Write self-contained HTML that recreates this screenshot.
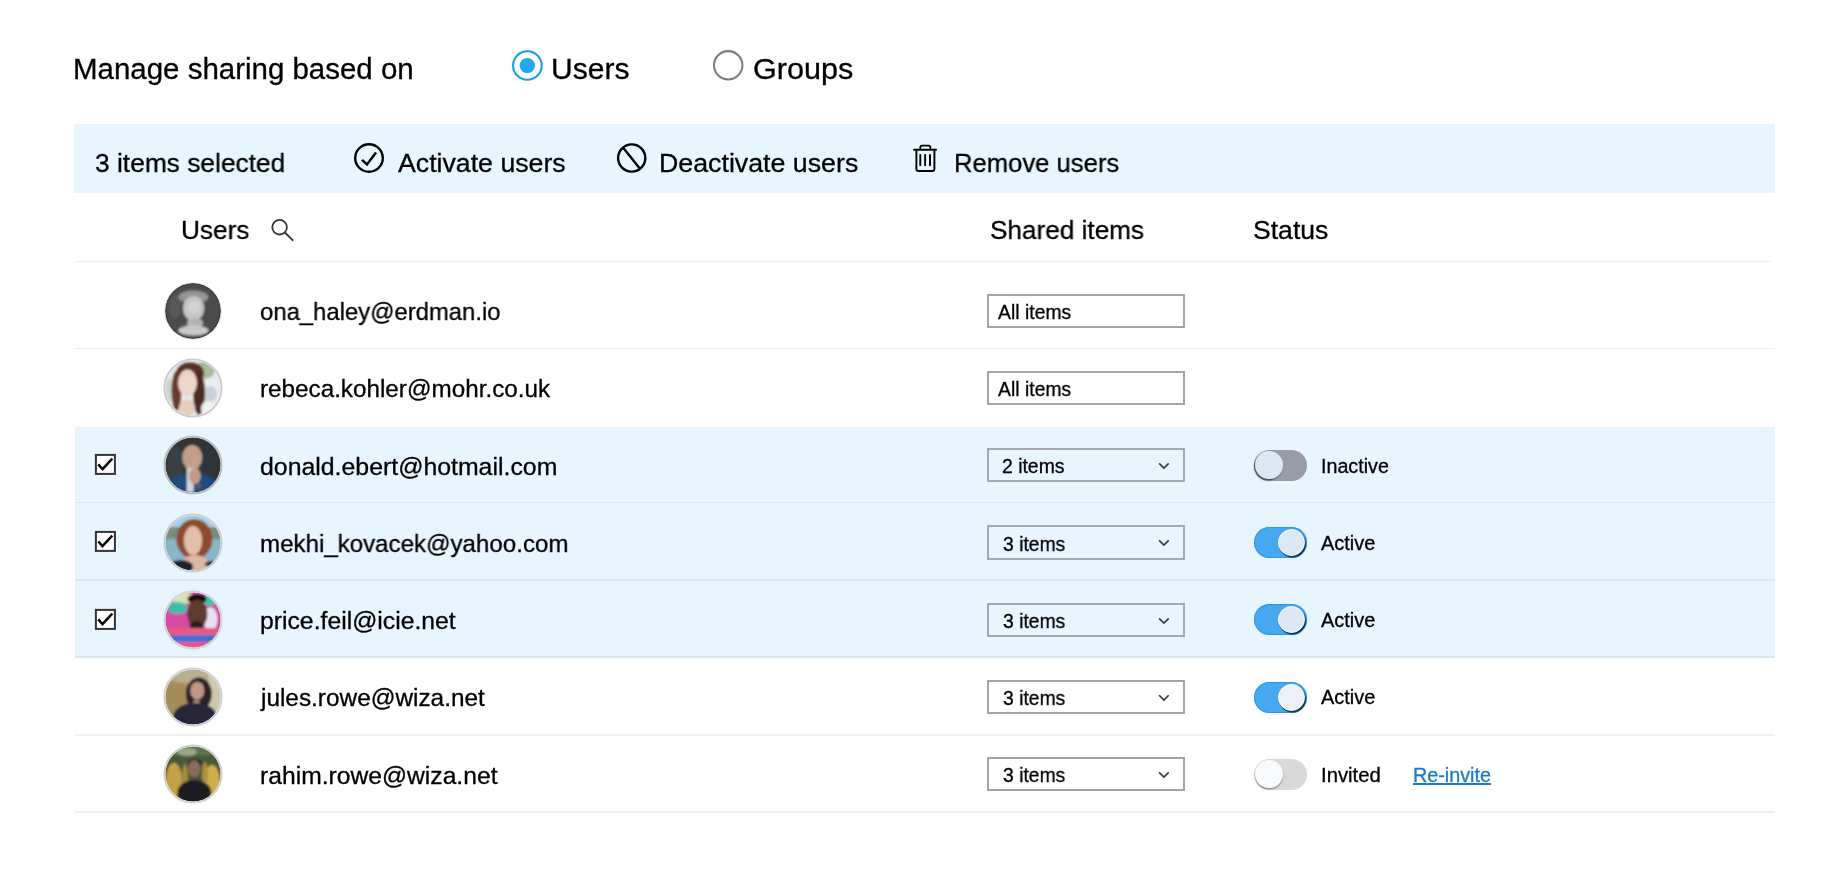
<!DOCTYPE html>
<html><head><meta charset="utf-8"><title>Manage sharing</title>
<style>
html,body{margin:0;padding:0;background:#fff;width:1830px;height:872px;overflow:hidden;position:relative}
body{font-family:"Liberation Sans",sans-serif}
.t{position:absolute;white-space:nowrap;transform-origin:0 0;font-family:"Liberation Sans",sans-serif;will-change:transform;-webkit-text-stroke:0.3px currentColor}
.tg{position:absolute;left:1254px;width:53px;height:31px;border-radius:15.5px}
.kn{position:absolute;top:1.2px;width:28.6px;height:28.6px;border-radius:50%}
</style></head><body>
<div class="t" style="left:73.28px;top:55.18px;font-size:29.2px;line-height:29.2px;transform:scaleX(1.0094);color:#000;">Manage sharing based on</div>
<div class="t" style="left:551.18px;top:55.18px;font-size:29.2px;line-height:29.2px;transform:scaleX(1.0296);color:#000;">Users</div>
<div class="t" style="left:752.76px;top:55.18px;font-size:29.2px;line-height:29.2px;transform:scaleX(1.0479);color:#000;">Groups</div>
<svg style="position:absolute;left:0;top:0" width="1830" height="120"><circle cx="527.4" cy="65.5" r="14.3" fill="#fff" stroke="#1a9fe6" stroke-width="2.1"/><circle cx="527.3" cy="65.6" r="7.7" fill="#24a8ee"/><circle cx="728.2" cy="65.3" r="14.2" fill="#fff" stroke="#7c7c7c" stroke-width="2.1"/></svg>
<div style="position:absolute;left:73.5px;top:123.5px;width:1701.5px;height:69.5px;background:#e6f5fe"></div>
<div class="t" style="left:94.60px;top:150.15px;font-size:26.4px;line-height:26.4px;transform:scaleX(0.9976);color:#000;">3 items selected</div>
<div class="t" style="left:398.25px;top:150.15px;font-size:26.4px;line-height:26.4px;transform:scaleX(1.0116);color:#000;">Activate users</div>
<div class="t" style="left:659.20px;top:150.15px;font-size:26.4px;line-height:26.4px;transform:scaleX(1.0139);color:#000;">Deactivate users</div>
<div class="t" style="left:953.50px;top:150.15px;font-size:26.4px;line-height:26.4px;transform:scaleX(0.9708);color:#000;">Remove users</div>
<svg style="position:absolute;left:0;top:120px" width="1200" height="80" viewBox="0 120 1200 80"><circle cx="369" cy="158" r="13.8" fill="none" stroke="#000" stroke-width="2.4"/><path d="M362 159.8 L367 164.5 L376 152.6" fill="none" stroke="#000" stroke-width="2.5" stroke-linecap="butt" stroke-linejoin="miter"/><circle cx="631.7" cy="158" r="13.6" fill="none" stroke="#000" stroke-width="2.4"/><path d="M623.0 147.6 L639.8 168.6" stroke="#000" stroke-width="2.4"/><path d="M914.1 149.7 H936.1" stroke="#000" stroke-width="1.9" stroke-linecap="round"/><path d="M920.3 149.2 V147.4 Q920.3 145.6 922.1 145.6 H928.6 Q930.4 145.6 930.4 147.4 V149.2" fill="none" stroke="#000" stroke-width="1.8"/><path d="M916.4 150.5 V169 Q916.4 171 918.4 171 H932.4 Q934.4 171 934.4 169 V150.5" fill="none" stroke="#000" stroke-width="1.9"/><path d="M920.3 155 V165.3 M925.1 155 V165.3 M930 155 V165.3" stroke="#000" stroke-width="1.9" stroke-linecap="round"/></svg>
<div class="t" style="left:181.38px;top:217.25px;font-size:26.4px;line-height:26.4px;transform:scaleX(0.9917);color:#000;">Users</div>
<div class="t" style="left:990.21px;top:217.25px;font-size:26.4px;line-height:26.4px;transform:scaleX(0.9903);color:#000;">Shared items</div>
<div class="t" style="left:1252.79px;top:217.25px;font-size:26.4px;line-height:26.4px;transform:scaleX(1.0070);color:#000;">Status</div>
<svg style="position:absolute;left:260px;top:210px" width="40" height="40" viewBox="260 210 40 40"><circle cx="279.6" cy="227.2" r="7.3" fill="none" stroke="#333" stroke-width="1.8"/><path d="M284.9 232.5 L292.6 240.2" stroke="#333" stroke-width="1.9" stroke-linecap="round"/></svg>
<div style="position:absolute;left:75px;top:260.8px;width:1696px;height:1.6px;background:#efefef"></div>
<div style="position:absolute;left:75px;top:426.8px;width:1700px;height:231.6px;background:#e7f5fe"></div>
<div style="position:absolute;left:75px;top:347.7px;width:1700px;height:1.6px;background:#f0f0f0"></div>
<div class="t" style="left:260.20px;top:300.11px;font-size:24.2px;line-height:24.2px;transform:scaleX(0.9866);color:#000;">ona_haley@erdman.io</div>
<div style="position:absolute;left:987px;top:293.5px;width:198px;height:34.3px;box-sizing:border-box;border:2px solid #a4a4a4;background:#fff"></div>
<div class="t" style="left:997.76px;top:302.78px;font-size:19.4px;line-height:19.4px;transform:scaleX(0.9978);color:#000;">All items</div>
<div class="t" style="left:259.59px;top:377.38px;font-size:24.2px;line-height:24.2px;transform:scaleX(1.0023);color:#000;">rebeca.kohler@mohr.co.uk</div>
<div style="position:absolute;left:987px;top:370.8px;width:198px;height:34.3px;box-sizing:border-box;border:2px solid #a4a4a4;background:#fff"></div>
<div class="t" style="left:997.76px;top:380.05px;font-size:19.4px;line-height:19.4px;transform:scaleX(0.9978);color:#000;">All items</div>
<div style="position:absolute;left:75px;top:501.7px;width:1700px;height:1.6px;background:#d9e8f1"></div>
<div class="t" style="left:260.16px;top:454.65px;font-size:24.2px;line-height:24.2px;transform:scaleX(1.0273);color:#000;">donald.ebert@hotmail.com</div>
<div style="position:absolute;left:987px;top:448.0px;width:198px;height:34.3px;box-sizing:border-box;border:2px solid #a2a9b0;background:#e7f5fe"></div>
<div class="t" style="left:1002.43px;top:457.32px;font-size:19.4px;line-height:19.4px;transform:scaleX(0.9991);color:#000;">2 items</div>
<svg style="position:absolute;left:1150px;top:455.1px" width="30" height="20" viewBox="1150 455.1 30 20"><path d="M1159.1 463.44 L1163.9 468.24 L1168.7 463.44" fill="none" stroke="#3a3a3a" stroke-width="1.7"/></svg>
<svg style="position:absolute;left:90px;top:449.1px" width="32" height="32" viewBox="90 449.1 32 32"><rect x="95.9" y="455.0" width="19" height="19" fill="#fff" stroke="#333" stroke-width="2"/><path d="M98.3 464.5 L102.5 469.3 L112.3 458.8" fill="none" stroke="#000" stroke-width="2.5"/></svg>
<div class="t" style="left:1320.68px;top:456.52px;font-size:19.4px;line-height:19.4px;transform:scaleX(1.0155);color:#000;">Inactive</div>
<div class="tg" style="top:449.6px;background:#979da4"><div class="kn" style="left:0.5px;background:#dce9f5;box-shadow:-1px 1.5px 1.5px rgba(0,0,0,.55)"></div></div>
<div style="position:absolute;left:75px;top:579.0px;width:1700px;height:1.6px;background:#d9e8f1"></div>
<div class="t" style="left:259.60px;top:531.92px;font-size:24.2px;line-height:24.2px;transform:scaleX(0.9960);color:#000;">mekhi_kovacek@yahoo.com</div>
<div style="position:absolute;left:987px;top:525.3px;width:198px;height:34.3px;box-sizing:border-box;border:2px solid #a2a9b0;background:#e7f5fe"></div>
<div class="t" style="left:1002.66px;top:534.59px;font-size:19.4px;line-height:19.4px;transform:scaleX(0.9953);color:#000;">3 items</div>
<svg style="position:absolute;left:1150px;top:532.4px" width="30" height="20" viewBox="1150 532.4 30 20"><path d="M1159.1 540.71 L1163.9 545.51 L1168.7 540.71" fill="none" stroke="#3a3a3a" stroke-width="1.7"/></svg>
<svg style="position:absolute;left:90px;top:526.4px" width="32" height="32" viewBox="90 526.4 32 32"><rect x="95.9" y="532.3" width="19" height="19" fill="#fff" stroke="#333" stroke-width="2"/><path d="M98.3 541.8 L102.5 546.6 L112.3 536.1" fill="none" stroke="#000" stroke-width="2.5"/></svg>
<div class="t" style="left:1321.16px;top:533.79px;font-size:19.4px;line-height:19.4px;transform:scaleX(1.0283);color:#000;">Active</div>
<div class="tg" style="top:526.9px;background:#48a8ef;box-shadow:inset 0 0 0 1px rgba(25,140,225,.6)"><div class="kn" style="left:24.0px;top:2.0px;width:27.2px;height:27.2px;background:#dce8f4;border:1.5px solid #fff;box-sizing:border-box;box-shadow:1px 1.5px 1px rgba(0,25,55,.85)"></div></div>
<div style="position:absolute;left:75px;top:656.3px;width:1700px;height:1.6px;background:#d9e8f1"></div>
<div class="t" style="left:259.60px;top:609.19px;font-size:24.2px;line-height:24.2px;transform:scaleX(1.0231);color:#000;">price.feil@icie.net</div>
<div style="position:absolute;left:987px;top:602.6px;width:198px;height:34.3px;box-sizing:border-box;border:2px solid #a2a9b0;background:#e7f5fe"></div>
<div class="t" style="left:1002.66px;top:611.86px;font-size:19.4px;line-height:19.4px;transform:scaleX(0.9953);color:#000;">3 items</div>
<svg style="position:absolute;left:1150px;top:609.7px" width="30" height="20" viewBox="1150 609.7 30 20"><path d="M1159.1 617.98 L1163.9 622.78 L1168.7 617.98" fill="none" stroke="#3a3a3a" stroke-width="1.7"/></svg>
<svg style="position:absolute;left:90px;top:603.7px" width="32" height="32" viewBox="90 603.7 32 32"><rect x="95.9" y="609.6" width="19" height="19" fill="#fff" stroke="#333" stroke-width="2"/><path d="M98.3 619.1 L102.5 623.9 L112.3 613.4" fill="none" stroke="#000" stroke-width="2.5"/></svg>
<div class="t" style="left:1321.16px;top:611.06px;font-size:19.4px;line-height:19.4px;transform:scaleX(1.0283);color:#000;">Active</div>
<div class="tg" style="top:604.2px;background:#48a8ef;box-shadow:inset 0 0 0 1px rgba(25,140,225,.6)"><div class="kn" style="left:24.0px;top:2.0px;width:27.2px;height:27.2px;background:#dce8f4;border:1.5px solid #fff;box-sizing:border-box;box-shadow:1px 1.5px 1px rgba(0,25,55,.85)"></div></div>
<div style="position:absolute;left:75px;top:734.0px;width:1700px;height:1.6px;background:#f0f0f0"></div>
<div class="t" style="left:261.10px;top:686.46px;font-size:24.2px;line-height:24.2px;transform:scaleX(1.0072);color:#000;">jules.rowe@wiza.net</div>
<div style="position:absolute;left:987px;top:679.9px;width:198px;height:34.3px;box-sizing:border-box;border:2px solid #a4a4a4;background:#fff"></div>
<div class="t" style="left:1002.66px;top:689.13px;font-size:19.4px;line-height:19.4px;transform:scaleX(0.9953);color:#000;">3 items</div>
<svg style="position:absolute;left:1150px;top:687.0px" width="30" height="20" viewBox="1150 687.0 30 20"><path d="M1159.1 695.25 L1163.9 700.05 L1168.7 695.25" fill="none" stroke="#3a3a3a" stroke-width="1.7"/></svg>
<div class="t" style="left:1321.16px;top:688.33px;font-size:19.4px;line-height:19.4px;transform:scaleX(1.0283);color:#000;">Active</div>
<div class="tg" style="top:681.5px;background:#48a8ef;box-shadow:inset 0 0 0 1px rgba(25,140,225,.6)"><div class="kn" style="left:24.0px;top:2.0px;width:27.2px;height:27.2px;background:#edf1f5;border:1.5px solid #fff;box-sizing:border-box;box-shadow:1px 1.5px 1px rgba(0,25,55,.85)"></div></div>
<div style="position:absolute;left:75px;top:811.3px;width:1700px;height:1.6px;background:#f0f0f0"></div>
<div class="t" style="left:259.56px;top:763.73px;font-size:24.2px;line-height:24.2px;transform:scaleX(1.0197);color:#000;">rahim.rowe@wiza.net</div>
<div style="position:absolute;left:987px;top:757.1px;width:198px;height:34.3px;box-sizing:border-box;border:2px solid #a4a4a4;background:#fff"></div>
<div class="t" style="left:1002.66px;top:766.40px;font-size:19.4px;line-height:19.4px;transform:scaleX(0.9953);color:#000;">3 items</div>
<svg style="position:absolute;left:1150px;top:764.2px" width="30" height="20" viewBox="1150 764.2 30 20"><path d="M1159.1 772.52 L1163.9 777.32 L1168.7 772.52" fill="none" stroke="#3a3a3a" stroke-width="1.7"/></svg>
<div class="t" style="left:1320.92px;top:765.60px;font-size:19.4px;line-height:19.4px;transform:scaleX(1.0477);color:#000;">Invited</div>
<div class="tg" style="top:758.7px;background:#d9d9d9"><div class="kn" style="left:0.5px;background:#f8fafc;box-shadow:0 1.5px 1.5px rgba(0,0,0,.35)"></div></div>
<div class="t" style="left:1412.68px;top:765.60px;font-size:19.4px;line-height:19.4px;transform:scaleX(1.0190);color:#1a7bc4;text-decoration:underline;text-underline-offset:1px;text-decoration-thickness:1.6px;">Re-invite</div>
<svg style="position:absolute;left:162.3px;top:279.8px" width="62" height="62" viewBox="-31 -31 62 62"><defs><clipPath id="cp0"><circle cx="0" cy="0" r="27.6"/></clipPath><filter id="bl0" x="-50%" y="-50%" width="200%" height="200%"><feGaussianBlur stdDeviation="1.2"/></filter></defs><g clip-path="url(#cp0)"><g filter="url(#bl0)"><rect x="-35" y="-35" width="70" height="70" fill="#4c4c4c"/><ellipse cx="-18" cy="-5" rx="6" ry="12" fill="#585858"/><ellipse cx="0.4" cy="-14" rx="15" ry="6.5" fill="#959595"/><ellipse cx="0.6" cy="-2.6" rx="10.5" ry="12.5" fill="#c6c6c6"/><ellipse cx="1" cy="-4" rx="6" ry="6" fill="#d2d2d2"/><ellipse cx="2" cy="12" rx="8" ry="5" fill="#b5b5b5"/><ellipse cx="0" cy="30" rx="27" ry="8" fill="#545454"/><ellipse cx="0.4" cy="19.5" rx="15" ry="5" fill="#c9c9c9"/></g></g><circle cx="0" cy="0" r="27.3" fill="none" stroke="#3c3c3c" stroke-width="1.2"/><circle cx="0" cy="0" r="28.4" fill="none" stroke="#e6e6e6" stroke-width="1"/></svg>
<svg style="position:absolute;left:162.3px;top:357.1px" width="62" height="62" viewBox="-31 -31 62 62"><defs><clipPath id="cp1"><circle cx="0" cy="0" r="27.6"/></clipPath><filter id="bl1" x="-50%" y="-50%" width="200%" height="200%"><feGaussianBlur stdDeviation="1.2"/></filter></defs><g clip-path="url(#cp1)"><g filter="url(#bl1)"><rect x="-35" y="-35" width="70" height="70" fill="#e8ecee"/><ellipse cx="12" cy="-18" rx="10" ry="9" fill="#a6be96"/><ellipse cx="17" cy="6" rx="7" ry="8" fill="#c8cfd8"/><ellipse cx="-24" cy="2" rx="4" ry="12" fill="#cdd5d4"/><ellipse cx="-3" cy="-15" rx="14" ry="11" fill="#5a3128"/><ellipse cx="-16.5" cy="3" rx="5" ry="20" fill="#6a3a2c"/><ellipse cx="6" cy="5" rx="6" ry="22" fill="#4e2a24"/><ellipse cx="-5.5" cy="-5" rx="9.5" ry="13.5" fill="#ecd6c9"/><ellipse cx="-6" cy="20" rx="8" ry="9" fill="#e6cdbd"/><ellipse cx="15" cy="21" rx="7" ry="8" fill="#f1f1f1"/></g></g><circle cx="0" cy="0" r="28.6" fill="none" stroke="#cbcbcb" stroke-width="1.9"/></svg>
<svg style="position:absolute;left:162.3px;top:434.3px" width="62" height="62" viewBox="-31 -31 62 62"><defs><clipPath id="cp2"><circle cx="0" cy="0" r="27.6"/></clipPath><filter id="bl2" x="-50%" y="-50%" width="200%" height="200%"><feGaussianBlur stdDeviation="1.2"/></filter></defs><g clip-path="url(#cp2)"><g filter="url(#bl2)"><rect x="-35" y="-35" width="70" height="70" fill="#2f3639"/><ellipse cx="-18" cy="0" rx="8" ry="20" fill="#394044"/><ellipse cx="-1" cy="-19" rx="10.5" ry="6" fill="#3b302c"/><ellipse cx="-0.8" cy="-7.4" rx="10" ry="12.5" fill="#c49e8a"/><ellipse cx="0" cy="23" rx="28" ry="14" fill="#1a4c7c"/><rect x="-6.3" y="3" width="7" height="24" fill="#cfd6da"/><ellipse cx="1.8" cy="11" rx="6" ry="8" fill="#c39c88"/><ellipse cx="5.4" cy="21" rx="3" ry="3" fill="#5a5a5a"/></g></g><circle cx="0" cy="0" r="28.6" fill="none" stroke="#b9bec2" stroke-width="1.9"/></svg>
<svg style="position:absolute;left:162.3px;top:511.6px" width="62" height="62" viewBox="-31 -31 62 62"><defs><clipPath id="cp3"><circle cx="0" cy="0" r="27.6"/></clipPath><filter id="bl3" x="-50%" y="-50%" width="200%" height="200%"><feGaussianBlur stdDeviation="1.2"/></filter></defs><g clip-path="url(#cp3)"><g filter="url(#bl3)"><rect x="-35" y="-35" width="70" height="70" fill="#a8d0e4"/><rect x="-35" y="-16" width="70" height="12" fill="#7b8c80"/><rect x="-35" y="-4" width="70" height="40" fill="#8ab4c8"/><ellipse cx="1.4" cy="-4" rx="18" ry="20" fill="#8d4c2f"/><ellipse cx="0" cy="-2.5" rx="9.2" ry="14.5" fill="#e2bfaa"/><ellipse cx="2" cy="22" rx="14" ry="10" fill="#dcb7a3"/><ellipse cx="-12" cy="24" rx="12" ry="7" fill="#1f2333"/><ellipse cx="18" cy="21" rx="6" ry="3" fill="#2c3545"/></g></g><circle cx="0" cy="0" r="28.6" fill="none" stroke="#c9ced2" stroke-width="1.9"/></svg>
<svg style="position:absolute;left:162.3px;top:588.9px" width="62" height="62" viewBox="-31 -31 62 62"><defs><clipPath id="cp4"><circle cx="0" cy="0" r="27.6"/></clipPath><filter id="bl4" x="-50%" y="-50%" width="200%" height="200%"><feGaussianBlur stdDeviation="1.2"/></filter></defs><g clip-path="url(#cp4)"><g filter="url(#bl4)"><rect x="-35" y="-35" width="70" height="70" fill="#d44ca6"/><ellipse cx="-10" cy="-22" rx="12" ry="6" fill="#d8e0b8"/><ellipse cx="-15.5" cy="-12" rx="10" ry="6" fill="#38c1a6"/><ellipse cx="16.5" cy="-19.5" rx="7" ry="5" fill="#3fc5a8"/><ellipse cx="17.5" cy="-1" rx="7" ry="12" fill="#e6e2f2"/><ellipse cx="4" cy="-21" rx="9.5" ry="5" fill="#141010"/><ellipse cx="4.3" cy="-6" rx="10" ry="14" fill="#5d3b2d"/><ellipse cx="3.7" cy="5.5" rx="7" ry="4" fill="#2b1b16"/><rect x="-35" y="8" width="70" height="7" fill="#e65a7e"/><rect x="-35" y="15" width="70" height="7" fill="#3c6fd8"/><rect x="-35" y="22" width="70" height="12" fill="#e85590"/></g></g><circle cx="0" cy="0" r="28.6" fill="none" stroke="#cfd4d6" stroke-width="1.9"/></svg>
<svg style="position:absolute;left:162.3px;top:666.2px" width="62" height="62" viewBox="-31 -31 62 62"><defs><clipPath id="cp5"><circle cx="0" cy="0" r="27.6"/></clipPath><filter id="bl5" x="-50%" y="-50%" width="200%" height="200%"><feGaussianBlur stdDeviation="1.2"/></filter></defs><g clip-path="url(#cp5)"><g filter="url(#bl5)"><rect x="-35" y="-35" width="70" height="70" fill="#a68c5a"/><ellipse cx="-5" cy="-22" rx="22" ry="8" fill="#b8b090"/><rect x="15" y="-35" width="20" height="70" fill="#cfc8ad"/><ellipse cx="5.8" cy="-3" rx="13" ry="16.5" fill="#2b2328"/><ellipse cx="4.3" cy="-6.3" rx="7" ry="9" fill="#c09886"/><ellipse cx="3.5" cy="8" rx="4" ry="5" fill="#b48c7a"/><ellipse cx="2" cy="20" rx="22" ry="14" fill="#262739"/></g></g><circle cx="0" cy="0" r="28.6" fill="none" stroke="#cdd0d6" stroke-width="1.9"/></svg>
<svg style="position:absolute;left:162.3px;top:743.4px" width="62" height="62" viewBox="-31 -31 62 62"><defs><clipPath id="cp6"><circle cx="0" cy="0" r="27.6"/></clipPath><filter id="bl6" x="-50%" y="-50%" width="200%" height="200%"><feGaussianBlur stdDeviation="1.2"/></filter></defs><g clip-path="url(#cp6)"><g filter="url(#bl6)"><rect x="-35" y="-35" width="70" height="70" fill="#4a5a38"/><rect x="-35" y="-35" width="70" height="16" fill="#5e7449"/><ellipse cx="-6" cy="-22" rx="10" ry="4" fill="#9aa888"/><ellipse cx="-19" cy="6" rx="8" ry="17" fill="#c2a246"/><ellipse cx="19" cy="8" rx="8" ry="17" fill="#cfae4a"/><ellipse cx="-8" cy="4" rx="3" ry="14" fill="#a88a3c"/><ellipse cx="12" cy="0" rx="3" ry="12" fill="#b09040"/><ellipse cx="2" cy="-11.5" rx="6.5" ry="3.5" fill="#141414"/><ellipse cx="1.3" cy="-5.5" rx="6" ry="8.5" fill="#8e6a5c"/><ellipse cx="1.4" cy="19" rx="17" ry="13" fill="#1c1d24"/></g></g><circle cx="0" cy="0" r="28.6" fill="none" stroke="#cfcfcf" stroke-width="1.9"/></svg>
</body></html>
